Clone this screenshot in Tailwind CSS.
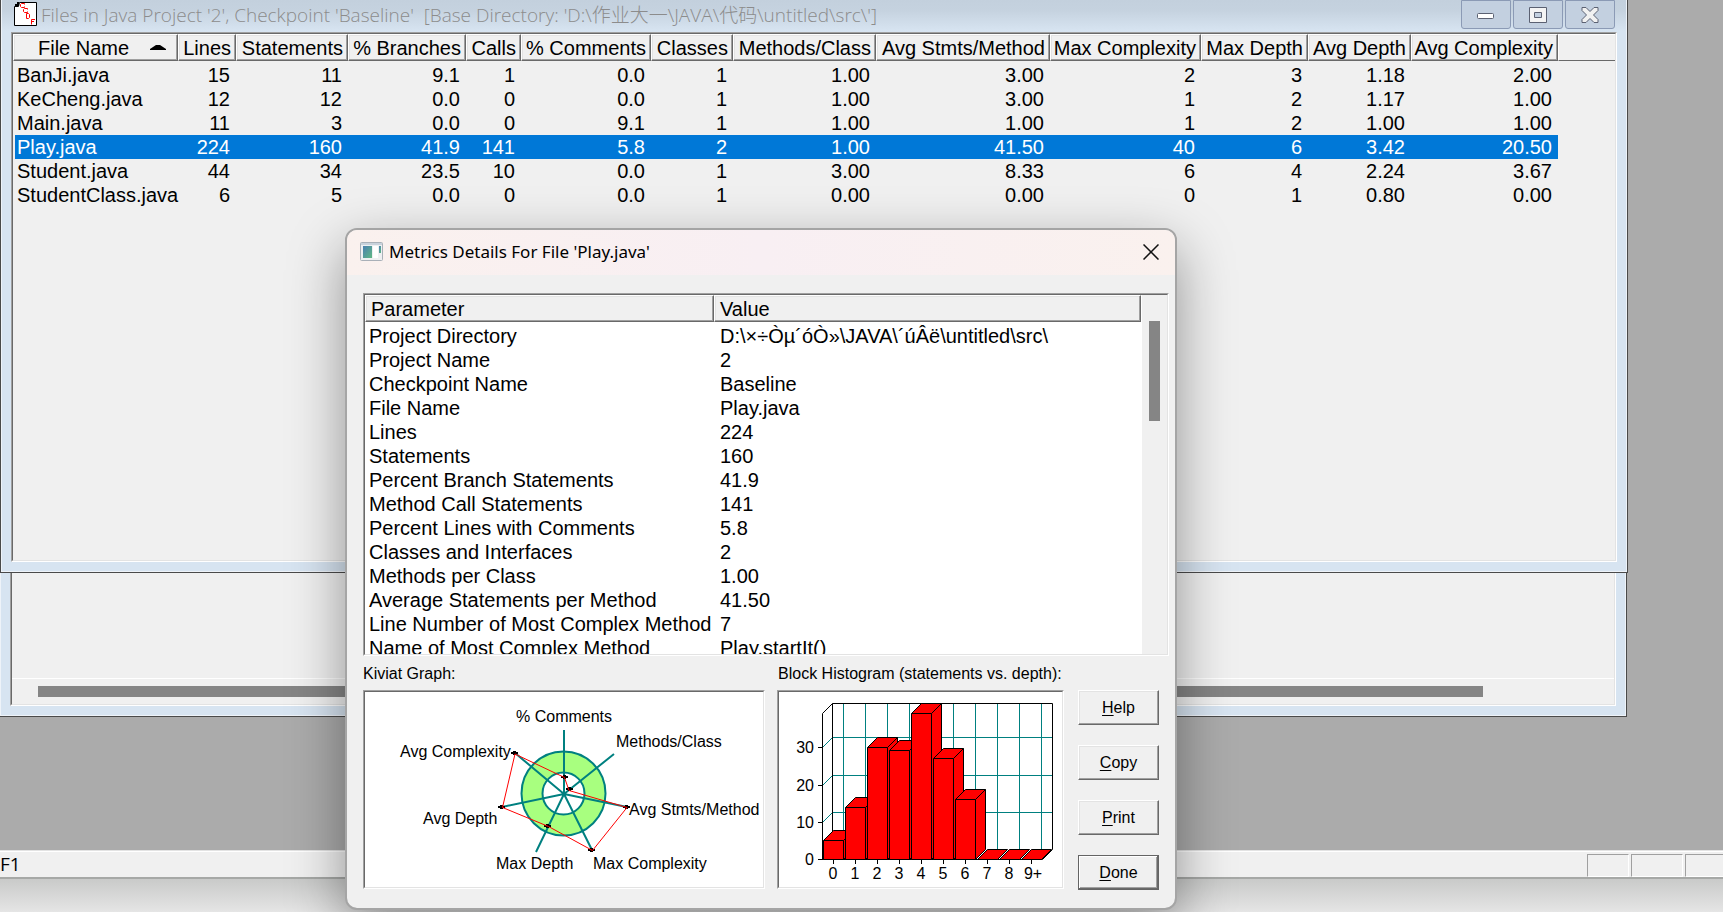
<!DOCTYPE html>
<html lang="en">
<head>
<meta charset="utf-8">
<title>Metrics Details</title>
<script src="https://cdn.jsdelivr.net/npm/@tailwindcss/browser@4"></script>
</head>
<body class="h-screen overflow-hidden bg-[#e3e3e3] font-['Liberation_Sans',Arial,sans-serif] text-black">
<div class="flex h-screen flex-col">

  <!-- MDI workspace -->
  <main class="relative min-h-[850px] overflow-hidden bg-[#ababab]">

    <!-- Background child window -->
    <section class="absolute top-[400px] left-0 right-[96px] border-r border-b border-[#4a4a4a]">
      <div class="border-r border-b border-l border-[#eef3f9] bg-[#d7e4f1] pr-[9px] pb-[9px] pl-[9px]">
        <div class="border-t border-r border-b border-l border-t-[#a0a0a0] border-r-white border-b-white border-l-[#a0a0a0]">
          <div class="border-t border-r border-b border-l border-t-[#696969] border-r-[#e3e3e3] border-b-[#e3e3e3] border-l-[#696969] bg-[#f0f0f0]">
            <div class="h-[276px]"></div>
            <div class="h-[26px] border-t border-white pt-[7px] pr-[131px] pl-[26px]"><div class="h-[11px] bg-[#858585]"></div></div>
          </div>
        </div>
      </div>
    </section>

    <!-- Files window -->
    <section class="absolute top-0 left-0 right-[95px] border-r border-b border-l border-[#4a4a4a]">
      <div class="border-r border-b border-l border-[#eef3f9] bg-[linear-gradient(#c3d0dd,#c5d2df_10px,#d7e4f1_31px)] pr-[9px] pb-[9px] pl-[9px]">
        <header class="flex h-[32px] items-start justify-between pr-0.5">
          <div class="flex h-[30px] items-center gap-[3px] pl-[3px]">
            <svg class="-mt-[2px] h-6 w-6 shrink-0" viewBox="0 0 24 24" aria-hidden="true">
              <path d="M5.500 .5H22.500V23.500H.5V4.500H4.500Z" fill="#fff" stroke="#000"/>
              <path d="M1 4V2h2V0h2v4z" fill="#000"/>
              <path d="M10.500 2.500V1.500H7.500L6.500 2.500V4.500L7.500 5.500H10.500V4.500M13.500 7.500V6.500H10.500L9.500 7.500V9.500L10.500 10.500H13.500V9.500M12.500 11.500V16.500H14.500L15.500 15.500V12.500L14.500 11.500ZM17.500 22.500V17.500H21M17.500 19.500H20" fill="none" stroke="#f00"/>
            </svg>
            <h1 class="font-['Open_Sans','Noto_Sans_CJK_SC',sans-serif] text-[19px] leading-6 font-light whitespace-pre text-[#8c8c8c]">Files in Java Project '2', Checkpoint 'Baseline'  [Base Directory: 'D:\作业大一\JAVA\代码\untitled\src\']</h1>
          </div>
          <div class="flex gap-0.5">
            <button aria-label="Minimize" class="flex h-[29px] w-[50px] items-center justify-center rounded-b-[3px] border border-[#8b9ab5] bg-[#c3d0e0]"><svg class="h-4 w-5" viewBox="0 0 20 16"><rect x="1.500" y="6.500" width="16" height="5" rx="1" fill="#fff" stroke="#5b6172"/></svg></button>
            <button aria-label="Maximize" class="flex h-[29px] w-[50px] items-center justify-center rounded-b-[3px] border border-[#8b9ab5] bg-[#c3d0e0]"><svg class="h-4 w-5" viewBox="0 0 20 16"><path fill-rule="evenodd" d="M1.500.5h17v15h-17zM6.500 5.500v5h7v-5z" fill="#f4f4f4" stroke="#5b6172"/></svg></button>
            <button aria-label="Close" class="flex h-[29px] w-[50px] items-center justify-center rounded-b-[3px] border border-[#8b9ab5] bg-[#c3d0e0]"><svg class="h-4 w-5" viewBox="0 0 20 16"><path d="M2 .5h4L10 4.500 14 .5h4v3L13.500 8l4.500 4.500v3h-4L10 11.500 6 15.500H2v-3L6.500 8 2 3.500z" fill="#f1f1f1" stroke="#5b6172" stroke-linejoin="round"/></svg></button>
          </div>
        </header>
        <div class="border border-t-[#a0a0a0] border-r-white border-b-white border-l-[#a0a0a0]">
          <div class="h-[528px] border border-t-[#696969] border-r-[#e3e3e3] border-b-[#e3e3e3] border-l-[#696969] bg-[#f0f0f0]">
            <table class="w-full table-fixed border-separate border-spacing-0 text-right text-[20px] leading-6">
              <colgroup><col class="w-[165px]"><col class="w-[58px]"><col class="w-[112px]"><col class="w-[118px]"><col class="w-[55px]"><col class="w-[130px]"><col class="w-[82px]"><col class="w-[143px]"><col class="w-[174px]"><col class="w-[151px]"><col class="w-[107px]"><col class="w-[103px]"><col class="w-[147px]"><col></colgroup>
              <thead class="[&_th]:h-[27px] [&_th]:border [&_th]:border-t-white [&_th]:border-r-[#696969] [&_th]:border-b-[#696969] [&_th]:border-l-white [&_th]:p-0 [&_th]:pr-1 [&_th]:font-normal [&_th]:whitespace-nowrap [&_th]:shadow-[inset_-1px_-1px_0_#a0a0a0,inset_1px_1px_0_#e3e3e3]">
                <tr><th scope="col"><span class="flex items-center justify-between pr-[7px] pl-6">File Name<svg class="h-[5px] w-4" viewBox="0 0 16 5" aria-hidden="true"><path d="M0 5V4L6 0h4l6 4V5z"/></svg></span></th><th scope="col">Lines</th><th scope="col">Statements</th><th scope="col">% Branches</th><th scope="col">Calls</th><th scope="col">% Comments</th><th scope="col">Classes</th><th scope="col">Methods/Class</th><th scope="col">Avg Stmts/Method</th><th scope="col">Max Complexity</th><th scope="col">Max Depth</th><th scope="col">Avg Depth</th><th scope="col">Avg Complexity</th><td class="border-t border-b border-l border-t-white border-b-[#696969] border-l-white"></td></tr>
              </thead>
              <tbody class="before:block before:h-0.5 [&_td]:p-0 [&_td]:pr-1.5 [&_th]:p-0 [&_th]:pl-1 [&_th]:text-left [&_th]:font-normal">
                <tr><th scope="row">BanJi.java</th><td>15</td><td>11</td><td>9.1</td><td>1</td><td>0.0</td><td>1</td><td>1.00</td><td>3.00</td><td>2</td><td>3</td><td>1.18</td><td>2.00</td></tr>
                <tr><th scope="row">KeCheng.java</th><td>12</td><td>12</td><td>0.0</td><td>0</td><td>0.0</td><td>1</td><td>1.00</td><td>3.00</td><td>1</td><td>2</td><td>1.17</td><td>1.00</td></tr>
                <tr><th scope="row">Main.java</th><td>11</td><td>3</td><td>0.0</td><td>0</td><td>9.1</td><td>1</td><td>1.00</td><td>1.00</td><td>1</td><td>2</td><td>1.00</td><td>1.00</td></tr>
                <tr class="text-white [&>*]:bg-[#0078d7]"><th scope="row" class="border-l-2 border-[#f0f0f0] !pl-0.5">Play.java</th><td>224</td><td>160</td><td>41.9</td><td>141</td><td>5.8</td><td>2</td><td>1.00</td><td>41.50</td><td>40</td><td>6</td><td>3.42</td><td>20.50</td></tr>
                <tr><th scope="row">Student.java</th><td>44</td><td>34</td><td>23.5</td><td>10</td><td>0.0</td><td>1</td><td>3.00</td><td>8.33</td><td>6</td><td>4</td><td>2.24</td><td>3.67</td></tr>
                <tr><th scope="row">StudentClass.java</th><td>6</td><td>5</td><td>0.0</td><td>0</td><td>0.0</td><td>1</td><td>0.00</td><td>0.00</td><td>0</td><td>1</td><td>0.80</td><td>0.00</td></tr>
              </tbody>
            </table>
          </div>
        </div>
      </div>
    </section>
  </main>

  <!-- Status bar -->
  <footer class="flex h-[29px] shrink-0 items-start justify-between border-b-2 border-[#a6a8a6] bg-[#f0f0f0] shadow-[inset_0_1px_0_#e3e3e3,inset_0_2px_0_#fff]">
    <span class="font-['Open_Sans',sans-serif] text-[19px] leading-[29px]">F1</span>
    <div class="flex gap-0.5 pt-1 [&>div]:h-[23px] [&>div]:border [&>div]:border-t-[#a0a0a0] [&>div]:border-r-white [&>div]:border-b-white [&>div]:border-l-[#a0a0a0]">
      <div class="w-[42px]"></div><div class="w-[52px]"></div><div class="w-[38px] !border-r-0"></div>
    </div>
  </footer>
  <div class="min-h-[33px] flex-1 bg-linear-to-b from-[#c9cac9] to-[#e5e5e5]"></div>
</div>

<!-- Metrics dialog -->
<div role="dialog" aria-labelledby="dlg" class="absolute top-[228px] left-[345px] w-[832px] overflow-hidden rounded-[12px] border-2 border-[#a5a5a5] bg-[#f0f0f0] bg-clip-padding shadow-[0_20px_56px_rgba(0,0,0,0.4)]">
  <header class="flex h-[45px] items-center justify-between bg-linear-to-r from-[#faf1ee] via-[#f8eff3] to-[#faf1ee] pr-[15px] pb-0.5 pl-[13px]">
    <div class="flex items-center gap-[6px]">
      <svg class="h-[19px] w-[23px]" viewBox="0 0 23 19" aria-hidden="true">
        <defs><linearGradient id="g" x1="0" y1="0" x2="1" y2="1"><stop offset="0" stop-color="#4a7fb0"/><stop offset="1" stop-color="#5fb884"/></linearGradient></defs>
        <rect x=".5" y=".5" width="22" height="18" rx="1" fill="#eef0f2" stroke="#a9b0b8"/>
        <path d="M1 1h21v2H1z" fill="#c9d2dc"/><path d="M3 4h9v12H3z" fill="url(#g)"/><path d="M13 4h5v12h-5z" fill="#fff"/><path d="M19 4h2v7h-2z" fill="url(#g)"/>
      </svg>
      <h2 id="dlg" class="font-['Noto_Sans',sans-serif] text-[17px] leading-6">Metrics Details For File 'Play.java'</h2>
    </div>
    <button aria-label="Close" class="p-px"><svg class="h-4 w-4" viewBox="0 0 16 16"><path d="M.5.5l15 15M15.500.5l-15 15" stroke="#111" stroke-width="1.500"/></svg></button>
  </header>

  <div class="px-[6px] pt-[18px] pb-[18px] pl-4">
    <div class="border border-t-[#a0a0a0] border-r-white border-b-white border-l-[#a0a0a0]">
      <div class="flex h-[361px] overflow-hidden border border-t-[#696969] border-r-[#e3e3e3] border-b-[#e3e3e3] border-l-[#696969] bg-[#f0f0f0]">
        <div class="flex-1 bg-white pr-px">
          <table class="w-full table-fixed border-separate border-spacing-0 text-left text-[20px] leading-6">
            <colgroup><col class="w-[349px]"><col></colgroup>
            <thead class="[&_th]:h-[27px] [&_th]:border [&_th]:border-t-white [&_th]:border-r-[#696969] [&_th]:border-b-[#696969] [&_th]:border-l-white [&_th]:bg-[#f0f0f0] [&_th]:p-0 [&_th]:pl-[5px] [&_th]:font-normal [&_th]:shadow-[inset_-1px_-1px_0_#a0a0a0,inset_1px_1px_0_#e3e3e3]"><tr><th scope="col">Parameter</th><th scope="col">Value</th></tr></thead>
            <tbody class="before:block before:h-0.5 [&_td]:p-0 [&_td]:pl-[6px] [&_th]:p-0 [&_th]:pl-1 [&_th]:font-normal [&_th]:whitespace-nowrap">
              <tr><th scope="row">Project Directory</th><td>D:\×÷Òµ´óÒ»\JAVA\´úÂë\untitled\src\</td></tr>
              <tr><th scope="row">Project Name</th><td>2</td></tr>
              <tr><th scope="row">Checkpoint Name</th><td>Baseline</td></tr>
              <tr><th scope="row">File Name</th><td>Play.java</td></tr>
              <tr><th scope="row">Lines</th><td>224</td></tr>
              <tr><th scope="row">Statements</th><td>160</td></tr>
              <tr><th scope="row">Percent Branch Statements</th><td>41.9</td></tr>
              <tr><th scope="row">Method Call Statements</th><td>141</td></tr>
              <tr><th scope="row">Percent Lines with Comments</th><td>5.8</td></tr>
              <tr><th scope="row">Classes and Interfaces</th><td>2</td></tr>
              <tr><th scope="row">Methods per Class</th><td>1.00</td></tr>
              <tr><th scope="row">Average Statements per Method</th><td>41.50</td></tr>
              <tr><th scope="row">Line Number of Most Complex Method</th><td>7</td></tr>
              <tr><th scope="row">Name of Most Complex Method</th><td>Play.startIt()</td></tr>
            </tbody>
          </table>
        </div>
        <div class="w-[25px] pt-[26px] pl-[7px]"><div class="h-[100px] w-[11px] bg-[#858585]"></div></div>
      </div>
    </div>

    <div class="flex text-[16px] leading-5">
      <section class="w-[402px]">
        <h3 class="pt-2 pb-[6px]">Kiviat Graph:</h3>
        <div class="border border-t-[#a0a0a0] border-r-white border-b-white border-l-[#a0a0a0]"><div class="border border-t-[#696969] border-r-[#e3e3e3] border-b-[#e3e3e3] border-l-[#696969] bg-white">
          <svg class="block h-[195px] w-full" viewBox="0 0 398 195" role="img" aria-label="Kiviat graph">
            <circle cx="198.500" cy="101.500" r="42" fill="#a8ff7f" stroke="#008080" stroke-width="2"/>
            <circle cx="198.500" cy="101.500" r="21" fill="#fff" stroke="#008080" stroke-width="2"/>
            <path d="M199 102V38M199 102L249 62M199 102L262 115M199 102L227 158M199 102L171 160M199 102L137 115M199 102L150 61" fill="none" stroke="#008080" stroke-width="2"/>
            <g fill="#000"><path id="m" d="M198 83h3v1h2v2h-2v1h-3v-1h-2v-2h2z"/><use href="#m" x="5" y="12"/><use href="#m" x="62" y="30"/><use href="#m" x="27" y="73"/><use href="#m" x="-17" y="49"/><use href="#m" x="-63" y="30"/><use href="#m" x="-50" y="-24"/></g>
            <path d="M199.500 85.500L204 98.500 262 115.500 227.500 158.500 183.500 134.500 137.500 115.500 150 62Z" fill="none" stroke="#f00"/>
            <g font-size="16">
              <text x="151" y="30">% Comments</text><text x="251" y="55">Methods/Class</text><text x="264" y="123">Avg Stmts/Method</text><text x="228" y="177">Max Complexity</text><text x="131" y="177">Max Depth</text><text x="58" y="132">Avg Depth</text><text x="35" y="65">Avg Complexity</text>
            </g>
          </svg>
        </div></div>
      </section>
      <section class="ml-3 w-[287px]">
        <h3 class="pt-2 pb-[6px] pl-px whitespace-nowrap">Block Histogram (statements vs. depth):</h3>
        <div class="border border-t-[#a0a0a0] border-r-white border-b-white border-l-[#a0a0a0]"><div class="border border-t-[#696969] border-r-[#e3e3e3] border-b-[#e3e3e3] border-l-[#696969] bg-white">
          <svg class="block h-[195px] w-full" viewBox="0 0 283 195" role="img" aria-label="Block histogram of statements by depth">
            <path d="M64.500 11V158M86.500 11V158M108.500 11V158M130.500 11V158M152.500 11V158M174.500 11V158M196.500 11V158M218.500 11V158M240.500 11V158M262.500 11V158M43.500 55.500l10-10H273.500M43.500 93.500l10-10H273.500M43.500 130.500l10-10H273.500" fill="none" stroke="#008080"/>
            <path d="M43.500 167.500V21.500l10-10H273.500V157.500l-10 10H39M53.500 11.500V157.500M39 55.500h5M39 93.500h5M39 130.500h5M54.500 167v5M76.500 167v5M98.500 167v5M120.500 167v5M142.500 167v5M164.500 167v5M186.500 167v5M208.500 167v5M230.500 167v5M252.500 167v5" fill="none" stroke="#000"/>
            <g fill="#f00" stroke="#000">
              <path d="M44.500 167.500V148.500l10-10h20V157.500l-10 10zM44.500 148.500h20V167.500M64.500 148.500l10-10"/>
              <path d="M66.500 167.500V115.500l10-10h20V157.500l-10 10zM66.500 115.500h20V167.500M86.500 115.500l10-10"/>
              <path d="M88.500 167.500V55.500l10-10h20V157.500l-10 10zM88.500 55.500h20V167.500M108.500 55.500l10-10"/>
              <path d="M110.500 167.500V58.500l10-10h20V157.500l-10 10zM110.500 58.500h20V167.500M130.500 58.500l10-10"/>
              <path d="M132.500 167.500V21.500l10-10h20V157.500l-10 10zM132.500 21.500h20V167.500M152.500 21.500l10-10"/>
              <path d="M154.500 167.500V66.500l10-10h20V157.500l-10 10zM154.500 66.500h20V167.500M174.500 66.500l10-10"/>
              <path d="M176.500 167.500V107.500l10-10h20V157.500l-10 10zM176.500 107.500h20V167.500M196.500 107.500l10-10"/>
              <path d="M198.500 167.500l10-10h20l-10 10zM220.500 167.500l10-10h20l-10 10zM242.500 167.500l10-10h20l-10 10z"/>
            </g>
            <g font-size="16" text-anchor="end"><text x="35" y="61">30</text><text x="35" y="99">20</text><text x="35" y="136">10</text><text x="35" y="173">0</text></g>
            <g font-size="16" text-anchor="middle"><text x="54" y="187">0</text><text x="76" y="187">1</text><text x="98" y="187">2</text><text x="120" y="187">3</text><text x="142" y="187">4</text><text x="164" y="187">5</text><text x="186" y="187">6</text><text x="208" y="187">7</text><text x="230" y="187">8</text><text x="254" y="187">9+</text></g>
          </svg>
        </div></div>
      </section>
      <div class="ml-[14px] flex flex-col gap-5 pt-[34px] [&>button]:h-[35px] [&>button]:w-[81px]">
        <button class="border border-t-white border-r-[#696969] border-b-[#696969] border-l-white shadow-[inset_-1px_-1px_0_#a0a0a0,inset_1px_1px_0_#e3e3e3]"><u class="underline-offset-2">H</u>elp</button>
        <button class="border border-t-white border-r-[#696969] border-b-[#696969] border-l-white shadow-[inset_-1px_-1px_0_#a0a0a0,inset_1px_1px_0_#e3e3e3]"><u class="underline-offset-2">C</u>opy</button>
        <button class="border border-t-white border-r-[#696969] border-b-[#696969] border-l-white shadow-[inset_-1px_-1px_0_#a0a0a0,inset_1px_1px_0_#e3e3e3]"><u class="underline-offset-2">P</u>rint</button>
        <button class="border border-[#646464] shadow-[inset_-1px_-1px_0_#696969,inset_1px_1px_0_#fff,inset_-2px_-2px_0_#a0a0a0]"><u class="underline-offset-2">D</u>one</button>
      </div>
    </div>
  </div>
</div>
</body>
</html>
